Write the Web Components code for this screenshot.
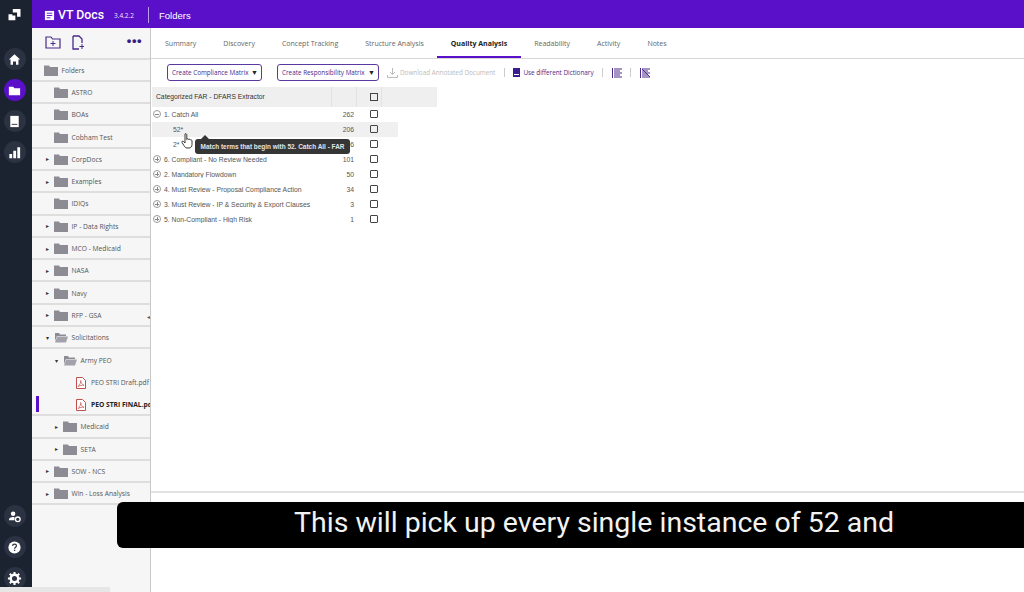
<!DOCTYPE html>
<html><head><meta charset="utf-8"><style>
html,body{margin:0;padding:0;width:1024px;height:592px;overflow:hidden;background:#fff}
body{font-family:"Liberation Sans",Arial,sans-serif}
</style></head><body>
<vt-app></vt-app>
<script>
const P='#5a0fc8';
function def(name,css,html){
  customElements.define(name,class extends HTMLElement{
    constructor(){super();const s=this.attachShadow({mode:'open'});
      s.innerHTML='<style>'+css+'</style>'+(typeof html==='function'?html(this):html);}
  });
}
const ICON={
 home:'<path d="M2 8 8 2.5 14 8h-1.8v5.5H9.6V10H6.4v3.5H3.8V8z" fill="#fff"/>',
 folder:'<path d="M2 4h4.5L8 5.5h6V13H2z" fill="#fff"/>',
 book:'<path d="M3.5 2h9v12h-9z" fill="#fff"/><path d="M5 10.5h6v1H5z" fill="#2a3140"/>',
 chart:'<path d="M2.5 9.5h3V14h-3zM6.700 6h3v8h-3zM11 2.500h3V14h-3z" fill="#fff"/>',
 user:'<circle cx="6.500" cy="5" r="2.400" fill="#fff"/><path d="M2 12c0-2.500 2-3.500 4.500-3.500.6 0 1 .1 1.500.2V12z" fill="#fff"/><circle cx="11.500" cy="11" r="2.500" fill="none" stroke="#fff" stroke-width="1.400"/>',
 help:'<circle cx="8" cy="8" r="6.500" fill="#fff"/><path d="M6 6.300C6 5 7 4.400 8 4.400s2.100.6 2.100 1.800c0 1.500-2 1.500-2 3" fill="none" stroke="#2a3140" stroke-width="1.300"/><rect x="7.400" y="10.300" width="1.400" height="1.400" fill="#2a3140"/>',
 gear:'<circle cx="8" cy="8" r="4" fill="none" stroke="#fff" stroke-width="2.600"/><path d="M8 1v3M8 12v3M1 8h3M12 8h3M3 3l2.200 2.200M10.800 10.800 13 13M13 3l-2.200 2.200M5.200 10.800 3 13" stroke="#fff" stroke-width="2.200"/>'
};
def('rail-btn',`:host{display:flex;width:22px;height:22px;border-radius:50%;background:#2b3242;align-items:center;justify-content:center;flex:none}
:host([active]){background:${P}}svg{width:15px;height:15px}`,
 h=>`<svg viewBox="0 0 16 16">${ICON[h.getAttribute('icon')]}</svg>`);
def('vt-rail',`:host{display:flex;flex-direction:column;align-items:center;width:32px;background:#1b2230;flex:none;height:592px;box-sizing:border-box;padding:9px 3px 3px 0}
.logo{width:13px;height:12px;margin-bottom:27px;flex:none}.g{display:flex;flex-direction:column;gap:9px;align-items:center}.b{margin-top:auto}`,
 `<svg class="logo" viewBox="0 0 14 14"><path d="M5 0h9v9h-4V4H5z" fill="#fff"/><path d="M0 6h4.500v1.500H8V13H0z" fill="#fff"/></svg>
 <div class="g"><rail-btn icon="home"></rail-btn><rail-btn icon="folder" active></rail-btn><rail-btn icon="book"></rail-btn><rail-btn icon="chart"></rail-btn></div>
 <div class="g b"><rail-btn icon="user"></rail-btn><rail-btn icon="help"></rail-btn><rail-btn icon="gear"></rail-btn></div>`);
def('vt-topbar',`:host{display:flex;align-items:center;height:28px;background:${P};color:#fff;flex:none;box-sizing:border-box;padding:2px 0 0 12px}
svg{width:11px;height:11px;margin-right:3px}.t{font:500 12.300px Roboto,sans-serif}.v{font:6.500px "Open Sans",sans-serif;margin-left:10px;opacity:.9}
.s{width:1px;height:16px;background:#b9a0e6;margin:0 10px 0 14px}.f{font:9.500px "Liberation Sans",sans-serif}`,
 `<svg viewBox="0 0 12 12"><path d="M1 1h10v10H1z" fill="#fff"/><path d="M3 3.500h6M3 6h6M3 8.500h4" stroke="${P}" stroke-width="1"/></svg><span class="t">VT Docs</span><span class="v">3.4.2.2</span><span class="s"></span><span class="f">Folders</span>`);
const folder=o=>o?'<svg width="14" height="11" viewBox="0 0 14 11"><path d="M1 1h4l1 1.500h6V4H3L1 9z" fill="#8d8b94"/><path d="M3.200 4.500H14L12 10.500H1z" fill="#a3a1aa"/></svg>':'<svg width="14" height="11" viewBox="0 0 14 11"><path d="M0 .5h5L6 2h8v9H0z" fill="#8d8b94"/></svg>';
const pdf='<svg width="10" height="12" viewBox="0 0 10 12"><path d="M.5.500h6l3 3v8h-9z" fill="#fff" stroke="#c0504d"/><path d="M2 9.500C4 8 5 5 4.700 3.500 5 6 6.500 8 8 8.300 6 8 4 8.500 2 9.500z" fill="none" stroke="#c0504d" stroke-width=".7"/></svg>';
def('tree-row',`:host{display:flex;align-items:center;height:22.300px;box-sizing:border-box;border-bottom:2px solid #dedede;padding-top:1px;font:6.700px "Open Sans","Liberation Sans",sans-serif;color:#555;white-space:nowrap;overflow:hidden;padding-left:calc(var(--l,0)*1px)}
:host([noline]){border-bottom:none;padding-top:0}
.a{width:8px;flex:none;font-size:6px;color:#333;text-align:center}.i{display:flex;margin:0 3.500px 0 3px;flex:none}
:host([pdf]) .i{margin-right:5px}
:host([sel]) .n{font-weight:700;color:#222}`,
 h=>{const k=h.getAttribute('k')||'';const arrow=k=='c'?'▸':k=='o'?'▾':'';
  const ic=h.hasAttribute('pdf')?pdf:folder(k=='o');
  return `<span class="a">${arrow}</span><span class="i">${ic}</span><span class="n"><slot></slot></span>`;});
def('vt-tree',`:host{display:flex;flex-direction:column;width:119px;flex:none;background:#f6f6f6;position:relative;overflow:hidden;border-right:1px solid #c9c9c9;box-sizing:border-box}
.tb{display:flex;align-items:center;height:31.500px;border-bottom:2px solid #dedede;padding:0 8px 0 13px;box-sizing:border-box;flex:none}
.tb svg{display:block}.d{margin-left:auto;color:#3c1d80;font:bold 13px "Liberation Sans";letter-spacing:.5px;line-height:12px;margin-top:-3px}
.mark{position:absolute;left:4px;top:368px;width:3px;height:16px;background:${P}}
.h{position:absolute;right:0;top:285px;font-size:6px;color:#555}`,
 `<div class="tb"><svg width="16" height="13" viewBox="0 0 16 13" style="margin-right:11px"><path d="M1 12V1h5l1.500 2H15v9z" fill="none" stroke="#4a2a8a" stroke-width="1.200"/><path d="M8 5v5M5.500 7.500h5" stroke="#4a2a8a"/></svg>
 <svg width="12" height="15" viewBox="0 0 12 15"><path d="M1 1h6l3 3v4M7 14H1V1" fill="none" stroke="#4a2a8a" stroke-width="1.300"/><path d="M10 9v5M7.500 11.500h5" stroke="#4a2a8a"/></svg><span class="d">•••</span></div>
 <slot></slot><span class="mark"></span><span class="h">◂</span>`);
def('tab-item',`:host{display:flex;align-items:center;padding:2px 13.500px 0;font:7px "Open Sans",sans-serif;color:#666;height:30px;box-sizing:border-box;border-bottom:2px solid transparent;white-space:nowrap}
:host([on]){font-weight:700;color:#222;border-bottom-color:${P}}`,'<slot></slot>');
def('vt-tabs',`:host{display:flex;height:31px;border-bottom:1px solid #d8d8d8;box-sizing:border-box;flex:none;padding-left:.5px}`,'<slot></slot>');
def('tool-btn',`:host{display:flex;align-items:center;justify-content:space-between;height:17px;border:1px solid #5a3aa0;border-radius:3px;padding:0 3px 0 4px;font:6.350px "Open Sans",sans-serif;color:#4a2a8a;box-sizing:border-box;white-space:nowrap;background:#fff}
b{font-size:7px;color:#222}`,'<slot></slot><b>▼</b>');
def('vt-toolbar',`:host{display:flex;align-items:center;height:27px;padding-left:16px;flex:none;font:6.350px "Open Sans",sans-serif;white-space:nowrap}
tool-btn{margin-right:15px}.dl{color:#bbb;display:flex;align-items:center;gap:2px;margin-left:-7px}.u{color:#4a2a8a;display:flex;align-items:center;gap:3px}
.s{width:1px;height:9px;background:#ccc;margin:0 8.500px}svg{display:block}`,
 `<tool-btn style="width:95px">Create Compliance Matrix</tool-btn><tool-btn style="width:102px">Create Responsibility Matrix</tool-btn>
 <span class="dl"><svg width="11" height="10" viewBox="0 0 11 10"><path d="M5.500 0v6M3 4l2.500 2.500L8 4M.5 7v2.500h10V7" fill="none" stroke="#bbb"/></svg>Download Annotated Document</span><span class="s"></span>
 <span class="u"><svg width="7" height="9" viewBox="0 0 7 9"><path d="M0 0h7v9H0z" fill="#3c1d90"/><path d="M1 6h5v1H1z" fill="#fff"/></svg>Use different Dictionary</span><span class="s"></span>
 <svg width="10" height="10" viewBox="0 0 10 10"><path d="M.5 0v10M2 1h8M2 3h6M2 5h8M2 7h6M2 9h8" stroke="#4a2a8a"/></svg><span class="s"></span>
 <svg width="10" height="10" viewBox="0 0 10 10"><path d="M.5 0v10M2 1h8M2 3h6M2 5h8M2 7h6M2 9h8" stroke="#4a2a8a"/><path d="M2 1l8 8" stroke="#4a2a8a"/></svg>`);
def('far-row',`:host{display:flex;align-items:center;height:14.950px;font:6.800px "Liberation Sans",sans-serif;color:#555;white-space:nowrap;width:246px;box-sizing:border-box}
:host([hov]){background:#f0f0f0}
.n{flex:1;display:flex;align-items:center;padding-left:calc(var(--l,0)*1px);overflow:hidden}
.t{border:1px solid #999;border-radius:50%;box-sizing:border-box;margin-right:3px;flex:none;width:8px;height:8px;background:linear-gradient(#888,#888) center/4px 1px no-repeat}
.t.p{background:linear-gradient(#888,#888) center/4px 1px no-repeat,linear-gradient(#888,#888) center/1px 4px no-repeat}
.c{width:30px;text-align:right;flex:none}.k{height:8px;border:1px solid #444;border-radius:1px;box-sizing:border-box;margin:0 20px 0 16px;flex:none;width:8px}`,
 h=>{const t=h.getAttribute('t');const tw=t?`<span class="t ${t=='p'?'p':''}"></span>`:'';
  return `<span class="n">${tw}<span><slot></slot></span></span><span class="c">${h.getAttribute('c')}</span><span class="k"></span>`;});
def('far-table',`:host{display:block;position:relative;margin:1px 0 0 1px}
.h{display:flex;align-items:center;height:20px;width:285px;background:#efefef;font:6.750px "Liberation Sans",sans-serif;color:#333;white-space:nowrap}
.h .a{width:180px;padding-left:4px;box-sizing:border-box;height:100%;line-height:20px;border-right:1px solid #e2e2e2}
.h .b{width:24px;height:100%;border-right:1px solid #e2e2e2}.h .c{width:25px;box-sizing:border-box;padding-right:3px;height:100%;display:flex;align-items:center;justify-content:flex-end;border-right:1px solid #e2e2e2}
.k{width:8px;height:8px;border:1px solid #444;box-sizing:border-box}
.r{padding-top:0}`,
 `<div class="h"><span class="a">Categorized FAR - DFARS Extractor</span><span class="b"></span><span class="c"><span class="k"></span></span></div><div class="r"><slot></slot></div>`);
def('vt-tip',`:host{position:absolute;left:44px;top:53px;height:15px;width:155px;background:#353535;border-radius:3px;color:#e6e6e6;font:bold 6.450px "Liberation Sans",sans-serif;display:flex;align-items:center;justify-content:center;white-space:nowrap}
:host::before{content:"";position:absolute;left:6px;top:-4px;border:4px solid transparent;border-top:0;border-bottom-color:#353535}`,'<slot></slot>');
def('vt-caption',`:host{position:absolute;left:117px;top:502px;width:907px;height:46px;background:#000;border-radius:6px 0 0 6px;color:#f2f2f2;font:28.500px Roboto,sans-serif;display:flex;align-items:center;padding:0 0 5px 177px;box-sizing:border-box;white-space:nowrap}`,'<slot></slot>');
def('vt-status',`:host{position:absolute;left:0;top:587px;width:110px;height:5px;background:#e6e6e6}`,'');
def('vt-hand',`:host{position:absolute;left:30px;top:46px;width:14px;height:18px;display:block}svg{display:block}`,
 `<svg width="14" height="18" viewBox="0 0 14 17"><path d="M4 1.500c.8-.8 1.800 0 1.800 1V7l.3-.6c.7-.5 1.400 0 1.500.6.6-.6 1.500-.3 1.600.5.600-.5 1.800-.2 1.800.9v3.600c0 1.800-1 3.500-3 3.500H6c-1.500 0-2.300-1.200-3-2.400L1 10c-.5-1 .6-1.800 1.500-1L4 10.500z" fill="#fff" stroke="#222" stroke-width=".9"/></svg>`);
def('vt-main',`:host{display:flex;flex-direction:column;flex:1;min-width:0;position:relative}
.c{flex:1;position:relative}.l{height:101px;border-top:2px solid #e2e2e2;box-sizing:border-box;flex:none}`,
 `<vt-tabs><tab-item>Summary</tab-item><tab-item>Discovery</tab-item><tab-item>Concept Tracking</tab-item><tab-item>Structure Analysis</tab-item><tab-item on>Quality Analysis</tab-item><tab-item>Readability</tab-item><tab-item>Activity</tab-item><tab-item>Notes</tab-item></vt-tabs>
 <vt-toolbar></vt-toolbar>
 <div class="c"><far-table>
  <far-row t="m" c="262" style="--l:1">1. Catch All</far-row>
  <far-row hov c="206" style="--l:21">52*</far-row>
  <far-row c="56" style="--l:21">2*</far-row>
  <far-row t="p" c="101" style="--l:1">6. Compliant - No Review Needed</far-row>
  <far-row t="p" c="50" style="--l:1">2. Mandatory Flowdown</far-row>
  <far-row t="p" c="34" style="--l:1">4. Must Review - Proposal Compliance Action</far-row>
  <far-row t="p" c="3" style="--l:1">3. Must Review - IP &amp; Security &amp; Export Clauses</far-row>
  <far-row t="p" c="1" style="--l:1">5. Non-Compliant - High Risk</far-row>
 </far-table><vt-tip>Match terms that begin with 52. Catch All - FAR</vt-tip><vt-hand></vt-hand></div>
 <div class="l"></div>`);
const rows=[['Folders','',0],['ASTRO','',10],['BOAs','',10],['Cobham Test','',10],['CorpDocs','c',10],['Examples','c',10],['IDIQs','',10],['IP - Data Rights','c',10],['MCO - Medicaid','c',10],['NASA','c',10],['Navy','c',10],['RFP - GSA','c',10],['Solicitations','o',10],['Army PEO','o',19],['PEO STRI Draft.pdf','pdf',32],['PEO STRI FINAL.pdf','pdfs',32],['Medicaid','c',19],['SETA','c',19],['SOW - NCS','c',10],['Win - Loss Analysis','c',10]];
def('vt-app',`:host{display:flex;width:1024px;height:592px;position:relative;overflow:hidden}
.r{display:flex;flex-direction:column;flex:1;min-width:0}.b{display:flex;flex:1;min-height:0}`,
 ()=>`<vt-rail></vt-rail><div class="r"><vt-topbar></vt-topbar><div class="b"><vt-tree>${rows.map(([n,k,l])=>{
   const a=k.startsWith('pdf')?`pdf${k=='pdfs'?' sel':' noline'}`:`k="${k}"`;
   const line=(n=='Army PEO')?' noline':'';
   return `<tree-row ${a}${line} style="--l:${l+1}">${n}</tree-row>`}).join('')}</vt-tree><vt-main></vt-main></div></div><vt-caption>This will pick up every single instance of 52 and</vt-caption><vt-status></vt-status>`);
</script></body></html>
